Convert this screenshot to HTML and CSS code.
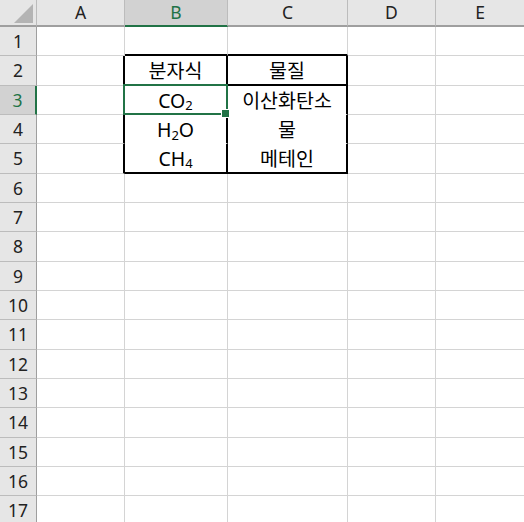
FILE: index.html
```html
<!DOCTYPE html>
<html lang="ko">
<head>
<meta charset="utf-8">
<title>Sheet</title>
<link rel="stylesheet" href="styles.css">
</head>
<body>
<div class="sheet">
  <div class="c corner"><svg class="tri" width="36" height="26" viewBox="0 0 36 26"><polygon points="33,4 33,23 14,23" fill="#b4b4b4"/></svg></div>
  <div class="c ch">A</div>
  <div class="c ch sel-ch">B</div>
  <div class="c ch">C</div>
  <div class="c ch">D</div>
  <div class="c ch">E</div>

  <div class="c rh">1</div><div class="c"></div><div class="c bb"></div><div class="c bb"></div><div class="c"></div><div class="c"></div>
  <div class="c rh">2</div><div class="c br"></div><div class="c br bb cell">분자식</div><div class="c br bb cell">물질</div><div class="c"></div><div class="c"></div>
  <div class="c rh sel-rh">3</div><div class="c br"></div><div class="c br nb sel cell">CO<span class="sub">2</span></div><div class="c br nb cell">이산화탄소</div><div class="c"></div><div class="c"></div>
  <div class="c rh">4</div><div class="c br"></div><div class="c br nb cell">H<span class="sub">2</span>O</div><div class="c br nb cell">물</div><div class="c"></div><div class="c"></div>
  <div class="c rh">5</div><div class="c br"></div><div class="c br bb cell">CH<span class="sub">4</span></div><div class="c br bb cell">메테인</div><div class="c"></div><div class="c"></div>
  <div class="c rh">6</div><div class="c"></div><div class="c"></div><div class="c"></div><div class="c"></div><div class="c"></div>
  <div class="c rh">7</div><div class="c"></div><div class="c"></div><div class="c"></div><div class="c"></div><div class="c"></div>
  <div class="c rh">8</div><div class="c"></div><div class="c"></div><div class="c"></div><div class="c"></div><div class="c"></div>
  <div class="c rh">9</div><div class="c"></div><div class="c"></div><div class="c"></div><div class="c"></div><div class="c"></div>
  <div class="c rh">10</div><div class="c"></div><div class="c"></div><div class="c"></div><div class="c"></div><div class="c"></div>
  <div class="c rh">11</div><div class="c"></div><div class="c"></div><div class="c"></div><div class="c"></div><div class="c"></div>
  <div class="c rh">12</div><div class="c"></div><div class="c"></div><div class="c"></div><div class="c"></div><div class="c"></div>
  <div class="c rh">13</div><div class="c"></div><div class="c"></div><div class="c"></div><div class="c"></div><div class="c"></div>
  <div class="c rh">14</div><div class="c"></div><div class="c"></div><div class="c"></div><div class="c"></div><div class="c"></div>
  <div class="c rh">15</div><div class="c"></div><div class="c"></div><div class="c"></div><div class="c"></div><div class="c"></div>
  <div class="c rh">16</div><div class="c"></div><div class="c"></div><div class="c"></div><div class="c"></div><div class="c"></div>
  <div class="c rh">17</div><div class="c"></div><div class="c"></div><div class="c"></div><div class="c"></div><div class="c"></div>
</div>
</body>
</html>
```
FILE: styles.css
```css
* { box-sizing: border-box; }
html, body { margin: 0; padding: 0; background: #fff; overflow: hidden; }
body {
  font-family: "Noto Sans", "Noto Sans CJK KR", sans-serif;
  font-size: 17.5px;
  color: #000;
}
.sheet {
  display: grid;
  grid-template-columns: 37px 88px 103px 120px 88px 89px;
  grid-template-rows: 27px;
  grid-auto-rows: 29.33px;
}
.c {
  border-right: 1px solid #d4d4d4;
  border-bottom: 1px solid #d4d4d4;
  display: flex;
  align-items: center;
  justify-content: center;
  white-space: nowrap;
  line-height: 1;
}
.cell {
  font-size: 19.5px;
  padding-top: 2px;
}
.corner {
  background: #e6e6e6;
  border-right: 1px solid #bcbcbc;
  border-bottom: 2px solid #9f9f9f;
  padding: 0;
  align-items: flex-start;
  justify-content: flex-start;
}
.tri { display: block; }
.ch {
  background: #e6e6e6;
  border-right: 1px solid #bcbcbc;
  border-bottom: 2px solid #9f9f9f;
  color: #222;
  padding-top: 1px;
}
.rh {
  background: #e6e6e6;
  border-right: 1px solid #9f9f9f;
  border-bottom: 1px solid #bcbcbc;
  color: #222;
  padding-top: 1px;
}
.sel-ch {
  background: #d2d2d2;
  color: #217346;
  border-bottom-color: #217346;
}
.sel-rh {
  background: #d2d2d2;
  color: #217346;
  border-right: 2px solid #217346;
}
.br { border-right: 2px solid #000; }
.bb { border-bottom: 2px solid #000; }
.nb { border-bottom-color: #fff; }
.sub {
  font-size: 13px;
  position: relative;
  top: 5px;
}
.sel { position: relative; }
.sel::after {
  content: "";
  position: absolute;
  left: -2px;
  top: -2px;
  right: -2px;
  bottom: -1px;
  border: 2px solid #217346;
  z-index: 1;
}
.sel::before {
  content: "";
  position: absolute;
  width: 7px;
  height: 7px;
  right: -4px;
  bottom: -4px;
  background: #217346;
  border: 1px solid #fff;
  z-index: 2;
}
```
